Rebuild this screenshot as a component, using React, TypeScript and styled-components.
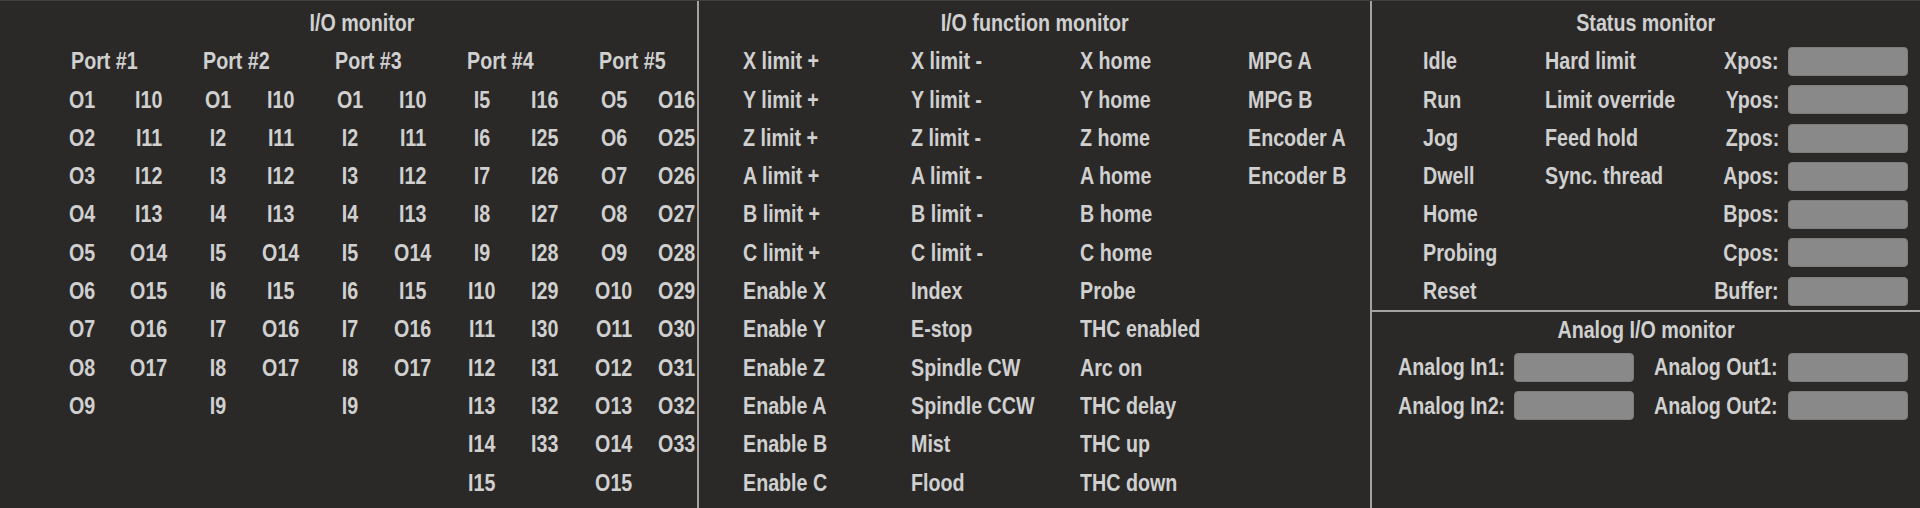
import React from "react";
import styled, { createGlobalStyle } from "styled-components";

const ROW = 38.3;

const Global = createGlobalStyle`
  html, body { margin: 0; padding: 0; background: #2a2927; }
  body {
    font-family: "Liberation Sans", Arial, sans-serif;
    font-weight: 700;
    font-size: 24px;
    color: #d0d0d0;
  }
`;

/* Arial-Narrow look: Liberation Sans Bold compressed horizontally */
const Narrow = styled.span<{ $origin?: "left" | "center" | "right" }>`
  display: inline-block;
  flex: none;
  white-space: nowrap;
  transform: scaleX(0.82);
  transform-origin: ${(p) => p.$origin ?? "left"} center;
`;

const Screen = styled.div`
  display: flex;
  width: 1920px;
  height: 508px;
  box-sizing: border-box;
  background: #2a2927;
  border-top: 1px solid #404040;
  overflow: hidden;
`;

const Panel = styled.section<{ $width: number }>`
  box-sizing: border-box;
  width: ${(p) => p.$width}px;
  flex: none;
  border-right: 2px solid #a3a3a3;
  display: flex;
  flex-direction: column;
  padding-top: 3px;
`;

const Title = styled.div<{ $shift?: number; $h?: number }>`
  height: ${(p) => p.$h ?? ROW}px;
  line-height: ${(p) => p.$h ?? ROW}px;
  text-align: center;
  white-space: nowrap;
  padding-left: ${(p) => (p.$shift ?? 0) * 2}px;
`;

const Cell = styled.div<{ $align?: "left" | "center" }>`
  height: ${ROW}px;
  line-height: ${ROW}px;
  white-space: nowrap;
  text-align: ${(p) => p.$align ?? "left"};
`;

/* ---------- I/O monitor ---------- */

const Ports = styled.div`
  display: flex;
  padding-left: 71px;
`;

const PortGroup = styled.div`
  width: 132px;
  flex: none;
  display: flex;
  flex-direction: column;
`;

const PortColumns = styled.div`
  display: flex;
  gap: 33px;
`;

const PortColumn = styled.div<{ $nudge?: number }>`
  width: 30px;
  display: flex;
  flex-direction: column;
  align-items: center;
  margin-left: ${(p) => p.$nudge ?? 0}px;
`;

/* ---------- I/O function monitor ---------- */

const FuncColumns = styled.div`
  display: flex;
  padding-left: 44px;
`;

const FuncColumn = styled.div`
  width: 168.3px;
  flex: none;
  display: flex;
  flex-direction: column;
`;

/* ---------- Status / analog monitor ---------- */

const RightPanel = styled.section`
  flex: 1;
  min-width: 0;
  display: flex;
  flex-direction: column;
  box-sizing: border-box;
`;

const StatusSection = styled.div`
  box-sizing: border-box;
  height: 309px;
  padding-top: 3px;
  display: flex;
  flex-direction: column;
`;

const StatusGrid = styled.div`
  display: grid;
  grid-template-columns: 122px minmax(0, 1fr) 110px 120px;
  grid-auto-rows: ${ROW}px;
  padding: 0 12px 0 51px;
  align-items: center;
`;

const Label = styled.div<{ $end?: boolean; $gap?: number }>`
  min-width: 0;
  height: ${ROW}px;
  line-height: ${ROW}px;
  display: flex;
  align-items: center;
  justify-content: ${(p) => (p.$end ? "flex-end" : "flex-start")};
  white-space: nowrap;
  margin-right: ${(p) => p.$gap ?? 0}px;
`;

const ValueBox = styled.div`
  box-sizing: border-box;
  width: 120px;
  height: 29px;
  background: #898989;
  border: 1px solid #7d7d7d;
  border-radius: 4px;
`;

const AnalogSection = styled.div`
  box-sizing: border-box;
  flex: 1;
  border-top: 2px solid #a3a3a3;
  display: flex;
  flex-direction: column;
`;

const AnalogGrid = styled.div`
  display: grid;
  grid-template-columns: 116px 120px minmax(0, 1fr) 120px;
  grid-auto-rows: ${ROW}px;
  padding: 0 12px 0 26px;
  align-items: center;
`;

const ports: { name: string; a: string[]; b: string[]; nudge?: number }[] = [
  {
    name: "Port #1",
    a: ["O1", "O2", "O3", "O4", "O5", "O6", "O7", "O8", "O9"],
    b: ["I10", "I11", "I12", "I13", "O14", "O15", "O16", "O17"],
    nudge: -4,
  },
  {
    name: "Port #2",
    a: ["O1", "I2", "I3", "I4", "I5", "I6", "I7", "I8", "I9"],
    b: ["I10", "I11", "I12", "I13", "O14", "I15", "O16", "O17"],
  },
  {
    name: "Port #3",
    a: ["O1", "I2", "I3", "I4", "I5", "I6", "I7", "I8", "I9"],
    b: ["I10", "I11", "I12", "I13", "O14", "I15", "O16", "O17"],
  },
  {
    name: "Port #4",
    a: ["I5", "I6", "I7", "I8", "I9", "I10", "I11", "I12", "I13", "I14", "I15"],
    b: ["I16", "I25", "I26", "I27", "I28", "I29", "I30", "I31", "I32", "I33"],
  },
  {
    name: "Port #5",
    a: ["O5", "O6", "O7", "O8", "O9", "O10", "O11", "O12", "O13", "O14", "O15"],
    b: ["O16", "O25", "O26", "O27", "O28", "O29", "O30", "O31", "O32", "O33"],
  },
];

const funcs: string[][] = [
  ["X limit +", "Y limit +", "Z limit +", "A limit +", "B limit +", "C limit +", "Enable X", "Enable Y", "Enable Z", "Enable A", "Enable B", "Enable C"],
  ["X limit -", "Y limit -", "Z limit -", "A limit -", "B limit -", "C limit -", "Index", "E-stop", "Spindle CW", "Spindle CCW", "Mist", "Flood"],
  ["X home", "Y home", "Z home", "A home", "B home", "C home", "Probe", "THC enabled", "Arc on", "THC delay", "THC up", "THC down"],
  ["MPG A", "MPG B", "Encoder A", "Encoder B"],
];

const status: [string, string, string][] = [
  ["Idle", "Hard limit", "Xpos:"],
  ["Run", "Limit override", "Ypos:"],
  ["Jog", "Feed hold", "Zpos:"],
  ["Dwell", "Sync. thread", "Apos:"],
  ["Home", "", "Bpos:"],
  ["Probing", "", "Cpos:"],
  ["Reset", "", "Buffer:"],
];

const analog: [string, string][] = [
  ["Analog In1:", "Analog Out1:"],
  ["Analog In2:", "Analog Out2:"],
];

export default function App() {
  return (
    <>
      <Global />
      <Screen>
        <Panel $width={699}>
          <Title $shift={13.5}>
            <Narrow $origin="center">I/O monitor</Narrow>
          </Title>
          <Ports>
            {ports.map((p) => (
              <PortGroup key={p.name}>
                <Cell>
                  <Narrow>{p.name}</Narrow>
                </Cell>
                <PortColumns>
                  <PortColumn $nudge={p.nudge}>
                    {p.a.map((t) => (
                      <Cell key={t} $align="center">
                        <Narrow $origin="center">{t}</Narrow>
                      </Cell>
                    ))}
                  </PortColumn>
                  <PortColumn $nudge={p.nudge ? -p.nudge : 0}>
                    {p.b.map((t) => (
                      <Cell key={t} $align="center">
                        <Narrow $origin="center">{t}</Narrow>
                      </Cell>
                    ))}
                  </PortColumn>
                </PortColumns>
              </PortGroup>
            ))}
          </Ports>
        </Panel>

        <Panel $width={673}>
          <Title>
            <Narrow $origin="center">I/O function monitor</Narrow>
          </Title>
          <FuncColumns>
            {funcs.map((col, i) => (
              <FuncColumn key={i}>
                {col.map((t) => (
                  <Cell key={t}>
                    <Narrow>{t}</Narrow>
                  </Cell>
                ))}
              </FuncColumn>
            ))}
          </FuncColumns>
        </Panel>

        <RightPanel>
          <StatusSection>
            <Title>
              <Narrow $origin="center">Status monitor</Narrow>
            </Title>
            <StatusGrid>
              {status.map(([a, b, c]) => (
                <React.Fragment key={a}>
                  <Label>
                    <Narrow>{a}</Narrow>
                  </Label>
                  <Label>
                    <Narrow>{b}</Narrow>
                  </Label>
                  <Label $end $gap={9}>
                    <Narrow $origin="right">{c}</Narrow>
                  </Label>
                  <ValueBox />
                </React.Fragment>
              ))}
            </StatusGrid>
          </StatusSection>
          <AnalogSection>
            <Title $h={36.3}>
              <Narrow $origin="center">Analog I/O monitor</Narrow>
            </Title>
            <AnalogGrid>
              {analog.map(([a, b]) => (
                <React.Fragment key={a}>
                  <Label>
                    <Narrow>{a}</Narrow>
                  </Label>
                  <ValueBox />
                  <Label $end $gap={10}>
                    <Narrow $origin="right">{b}</Narrow>
                  </Label>
                  <ValueBox />
                </React.Fragment>
              ))}
            </AnalogGrid>
          </AnalogSection>
        </RightPanel>
      </Screen>
    </>
  );
}
